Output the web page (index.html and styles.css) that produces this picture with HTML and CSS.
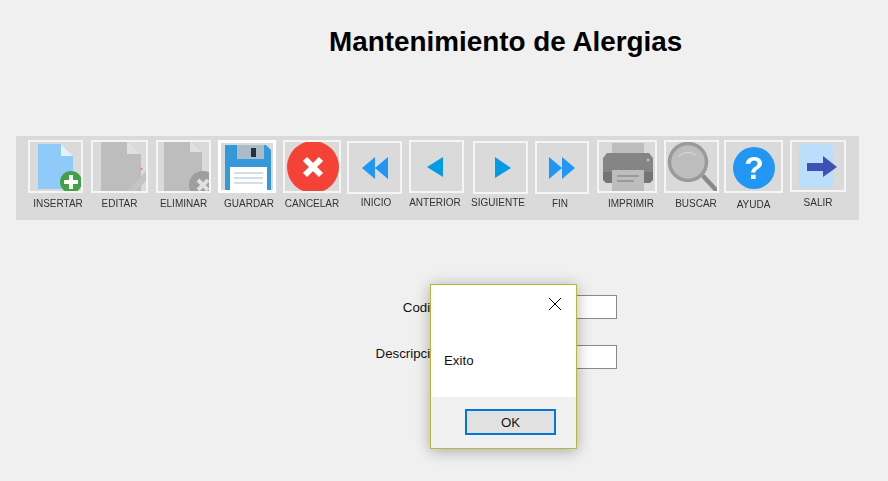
FILE: index.html
```html
<!DOCTYPE html>
<html lang="es">
<head>
  <meta charset="UTF-8" />
  <title>Mantenimiento de Alergias</title>
  <link rel="stylesheet" href="styles.css">
</head>
<body>
  <h1 class="title">Mantenimiento de Alergias</h1>

  <div class="toolbar">
    <div class="tool t-insertar">
      <div class="tool-btn">
        <svg viewBox="0 0 55 53">
          <path d="M10 4H33L45 16V49H10Z" fill="#90caf9"/>
          <path d="M33 4L45 16H33Z" fill="#e3f2fd"/>
          <circle cx="43" cy="42" r="11" fill="#43a047"/>
          <path d="M43 35V49M36 42H50" stroke="#fff" stroke-width="4"/>
        </svg>
      </div>
      <span class="tool-label">INSERTAR</span>
    </div>
    <div class="tool t-editar">
      <div class="tool-btn">
        <svg viewBox="0 0 57 53">
          <path d="M10 0H36L50 14V52H10Z" fill="#bdbdbd"/>
          <path d="M36 0L50 14H36Z" fill="#e0e0e0"/>
          <path d="M35 52L55 31V41L44 52Z" fill="#c4c4c4"/>
          <path d="M49 27L52 29L50 30Z" fill="#ef7070"/>
        </svg>
      </div>
      <span class="tool-label">EDITAR</span>
    </div>
    <div class="tool t-eliminar">
      <div class="tool-btn">
        <svg viewBox="0 0 55 53">
          <path d="M8 0H34L46 12V52H8Z" fill="#bdbdbd"/>
          <path d="M34 0L46 12H34Z" fill="#e0e0e0"/>
          <circle cx="47" cy="45" r="14" fill="#9e9e9e"/>
          <path d="M42 40L52 50M52 40L42 50" stroke="#e0e0e0" stroke-width="4"/>
        </svg>
      </div>
      <span class="tool-label">ELIMINAR</span>
    </div>
    <div class="tool t-guardar">
      <div class="tool-btn tool-btn-active">
        <svg viewBox="0 0 58 53">
          <path d="M7 5H48L53 10V50H7Z" fill="#3498db"/>
          <rect x="19" y="5" width="27" height="14" fill="#a9bcc8"/>
          <rect x="33" y="8" width="5" height="9" fill="#263238"/>
          <rect x="12" y="27" width="37" height="23" fill="#fff"/>
          <path d="M16 33H45M16 38H45M16 43H45" stroke="#c5d5e0" stroke-width="1.5"/>
        </svg>
      </div>
      <span class="tool-label">GUARDAR</span>
    </div>
    <div class="tool t-cancelar">
      <div class="tool-btn">
        <svg viewBox="0 0 58 53">
          <circle cx="30" cy="27" r="26" fill="#f44336"/>
          <path d="M22 19L38 35M38 19L22 35" stroke="#fff" stroke-width="6"/>
        </svg>
      </div>
      <span class="tool-label">CANCELAR</span>
    </div>
    <div class="tool t-inicio">
      <div class="tool-btn">
        <svg viewBox="0 0 55 53">
          <path d="M15 27L28 16V38ZM28 27L41 16V38Z" fill="#2196f3"/>
        </svg>
      </div>
      <span class="tool-label">INICIO</span>
    </div>
    <div class="tool t-anterior">
      <div class="tool-btn">
        <svg viewBox="0 0 55 53">
          <path d="M18 27L34 17V37Z" fill="#039be5"/>
        </svg>
      </div>
      <span class="tool-label">ANTERIOR</span>
    </div>
    <div class="tool t-siguiente">
      <div class="tool-btn">
        <svg viewBox="0 0 55 53">
          <path d="M38 27L22 16V37Z" fill="#039be5"/>
        </svg>
      </div>
      <span class="tool-label">SIGUIENTE</span>
    </div>
    <div class="tool t-fin">
      <div class="tool-btn">
        <svg viewBox="0 0 54 53">
          <path d="M27 27L14 16V38ZM40 27L27 16V38Z" fill="#2196f3"/>
        </svg>
      </div>
      <span class="tool-label">FIN</span>
    </div>
    <div class="tool t-imprimir">
      <div class="tool-btn">
        <svg viewBox="0 0 60 53">
          <rect x="15" y="3" width="32" height="12" fill="#bdbdbd"/>
          <path d="M10 13H52L56 18V32H6V18Z" fill="#858585"/>
          <path d="M6 32H56V40L53 43H9L6 40Z" fill="#747474"/>
          <circle cx="51" cy="20" r="1.5" fill="#bdbdbd"/>
          <rect x="15" y="30" width="32" height="21" fill="#bdbdbd"/>
          <path d="M20 36H42M20 41H37" stroke="#8f8f8f" stroke-width="1.5"/>
        </svg>
      </div>
      <span class="tool-label">IMPRIMIR</span>
    </div>
    <div class="tool t-buscar">
      <div class="tool-btn">
        <svg viewBox="0 0 55 53">
          <path d="M40 37L52 50" stroke="#8a8a8a" stroke-width="4.5" stroke-linecap="round"/>
          <circle cx="24" cy="22" r="18.5" fill="#bdbdbd" stroke="#9a9a9a" stroke-width="3.5"/>
          <path d="M14 17Q23 9 32 15" fill="none" stroke="#d2d2d2" stroke-width="1.5"/>
        </svg>
      </div>
      <span class="tool-label">BUSCAR</span>
    </div>
    <div class="tool t-ayuda">
      <div class="tool-btn">
        <svg viewBox="0 0 59 53">
          <circle cx="30" cy="28" r="21" fill="#2196f3"/>
          <text class="help-mark" x="30" y="39">?</text>
        </svg>
      </div>
      <span class="tool-label">AYUDA</span>
    </div>
    <div class="tool t-salir">
      <div class="tool-btn">
        <svg viewBox="0 0 56 52">
          <rect x="9" y="4" width="34" height="44" rx="3" fill="#bbdefb"/>
          <path d="M17 23H33V16L47 27L33 37V31H17Z" fill="#3f51b5"/>
        </svg>
      </div>
      <span class="tool-label">SALIR</span>
    </div>
  </div>

  <div class="form">
    <label class="form-label">Codigo</label>
    <input class="form-input" type="text">
    <label class="form-label form-label-up">Descripcion</label>
    <input class="form-input" type="text">
  </div>

  <div class="dialog">
    <div class="dialog-body">
      <svg class="dialog-close" viewBox="0 0 14 14">
        <path d="M1 1L13 13M13 1L1 13" stroke="#000" stroke-width="1"/>
      </svg>
      <p class="dialog-text">Exito</p>
    </div>
    <div class="dialog-footer">
      <button class="dialog-ok">OK</button>
    </div>
  </div>
</body>
</html>
```

FILE: styles.css
```css
html, body {
  margin: 0;
  padding: 0;
  height: 100%;
  overflow: hidden;
  background-color: #f0f0f0;
  font-family: "Liberation Sans", Arial, sans-serif;
}

.title {
  margin: 0;
  padding: 26px 0 0 329px;
  height: 136px;
  box-sizing: border-box;
  font-size: 27.85px;
  line-height: 32px;
  font-weight: bold;
  color: #000;
}

/* barra de herramientas */
.toolbar {
  display: flex;
  align-items: flex-start;
  margin-left: 16px;
  width: 843px;
  height: 84px;
  padding-top: 4px;
  box-sizing: border-box;
  background-color: #dadada;
}

.tool {
  display: flex;
  flex-direction: column;
  flex: none;
  filter: blur(0.35px);
}

.tool-btn {
  height: 53px;
  box-sizing: border-box;
  border: 2px solid #f5f5f5;
  overflow: hidden;
}

.tool-btn-active {
  border-color: #fff;
  border-width: 3px;
}

.tool-btn svg {
  display: block;
  width: calc(100% + 4px);
  height: calc(100% + 4px);
  margin: -2px;
}

.tool-btn-active svg {
  width: calc(100% + 6px);
  height: calc(100% + 6px);
  margin: -3px;
}

.tool-label {
  align-self: center;
  margin-top: 5px;
  font-size: 10px;
  line-height: 12px;
  white-space: nowrap;
  color: #333;
}

.t-insertar { width: 55px; margin-left: 12px; }
.t-insertar .tool-label { margin-left: 5px; }
.t-editar { width: 57px; margin-left: 8px; }
.t-eliminar { width: 55px; margin-left: 8px; }
.t-guardar { width: 58px; margin-left: 7px; }
.t-guardar .tool-label { margin-left: 4px; }
.t-cancelar { width: 58px; margin-left: 7px; }
.t-inicio { width: 55px; margin-left: 6px; margin-top: 1px; }
.t-inicio .tool-label { margin-left: 3px; margin-top: 3px; }
.t-anterior { width: 55px; margin-left: 7px; }
.t-anterior .tool-label { margin-right: 3px; margin-top: 4px; }
.t-siguiente { width: 55px; margin-left: 9px; margin-top: 1px; }
.t-siguiente .tool-label { margin-right: 5px; margin-top: 3px; }
.t-fin { width: 54px; margin-left: 7px; margin-top: 1px; }
.t-fin .tool-label { margin-right: 4px; margin-top: 4px; }
.t-imprimir { width: 60px; margin-left: 8px; }
.t-imprimir .tool-label { margin-left: 8px; }
.t-buscar { width: 55px; margin-left: 7px; }
.t-buscar .tool-label { margin-left: 9px; }
.t-ayuda { width: 59px; margin-left: 5px; }
.t-ayuda .tool-label { margin-top: 6px; }
.t-salir { width: 56px; margin-left: 7px; }
.t-salir .tool-btn { height: 52px; }
.t-salir .tool-label { margin-top: 5px; }

.help-mark {
  font-family: "Liberation Sans", Arial, sans-serif;
  font-size: 32px;
  font-weight: bold;
  text-anchor: middle;
  fill: #fff;
}

/* formulario */
.form {
  display: grid;
  grid-template-columns: 445px 167px;
  column-gap: 5px;
  row-gap: 26px;
  margin-top: 75px;
  align-items: center;
}

.form-label {
  text-align: right;
  font-size: 13.3px;
  color: #111;
}

.form-label-up {
  margin-bottom: 8px;
}

.form-input {
  height: 24px;
  box-sizing: border-box;
  border: 1px solid #8a8a8a;
  background-color: #fff;
  padding: 0;
}

/* mensaje */
.dialog {
  position: absolute;
  left: 430px;
  top: 284px;
  width: 147px;
  height: 165px;
  box-sizing: border-box;
  display: flex;
  flex-direction: column;
  border: 1px solid #b5b83c;
  background-color: #f0f0f0;
  box-shadow: 0 2px 14px rgba(0, 0, 0, 0.3);
}

.dialog-body {
  position: relative;
  height: 112px;
  background-color: #fff;
}

.dialog-close {
  position: absolute;
  left: 117px;
  top: 12px;
  width: 14px;
  height: 14px;
}

.dialog-text {
  margin: 0;
  padding: 68px 0 0 13px;
  font-size: 13.3px;
  line-height: 16px;
  color: #111;
}

.dialog-footer {
  display: flex;
  padding: 12px 0 0 34px;
}

.dialog-ok {
  width: 91px;
  height: 26px;
  box-sizing: border-box;
  border: 2px solid #0078d7;
  background-color: #e1e1e1;
  font-family: "Liberation Sans", Arial, sans-serif;
  font-size: 13.3px;
  color: #111;
  padding: 0;
}
```
